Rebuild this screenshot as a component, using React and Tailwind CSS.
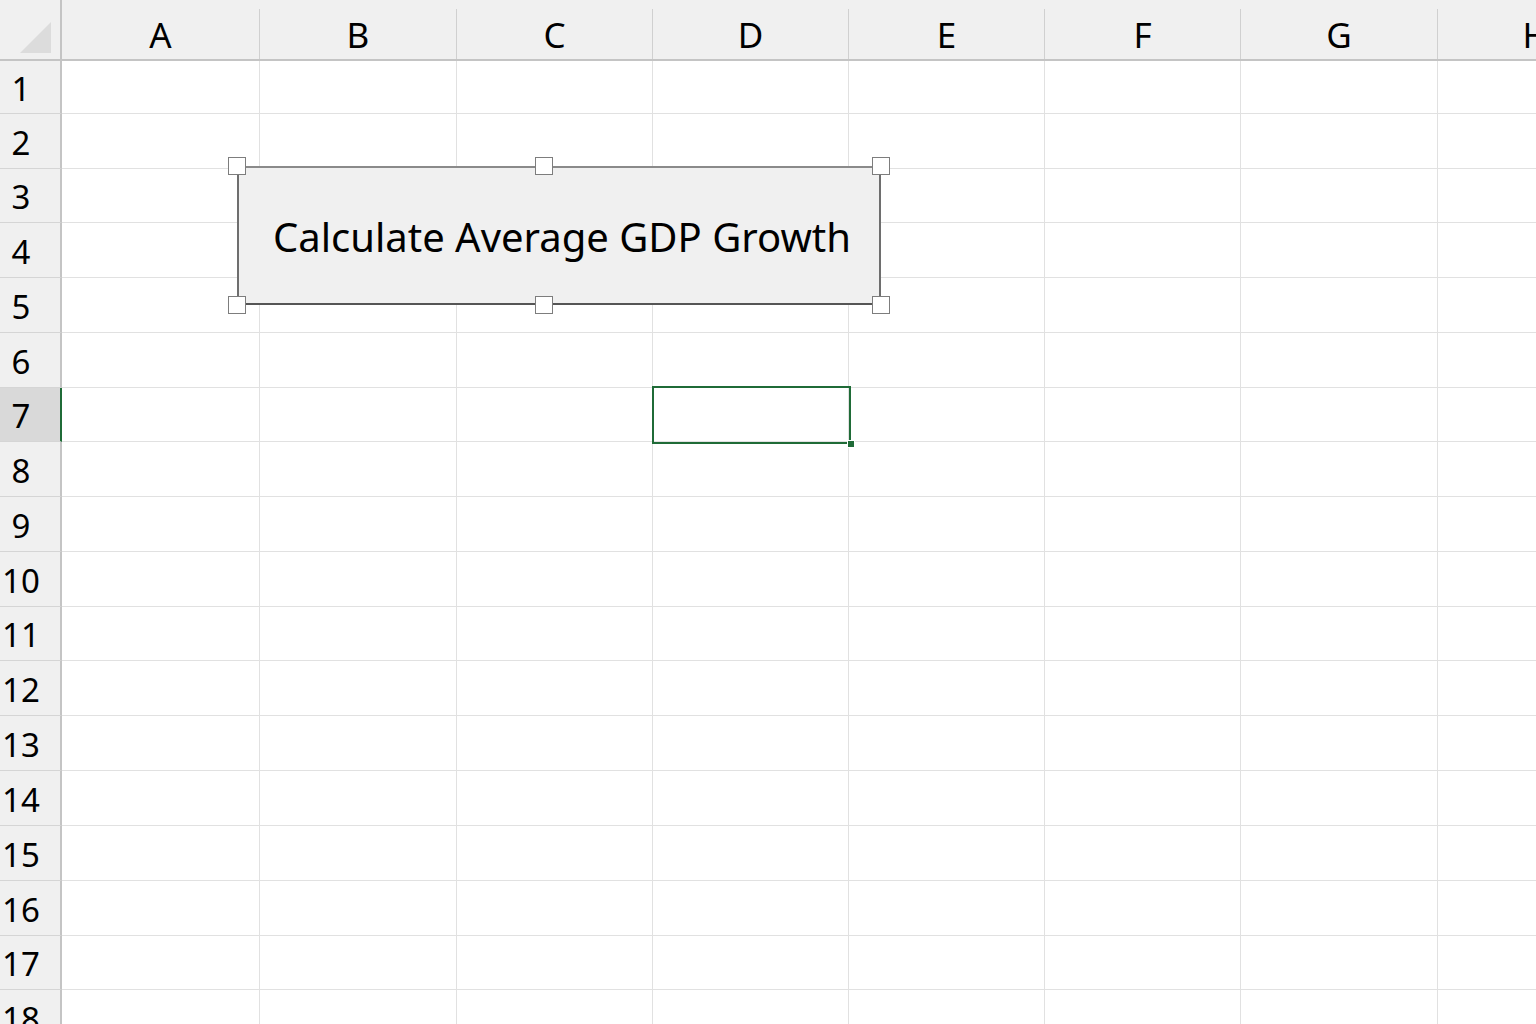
const cols = [
  { l: "A", w: "w-[198px]" },
  { l: "B", w: "w-[197px]" },
  { l: "C", w: "w-[196px]" },
  { l: "D", w: "w-[196px]" },
  { l: "E", w: "w-[196px]" },
  { l: "F", w: "w-[196px]" },
  { l: "G", w: "w-[197px]" },
  { l: "H", w: "w-[196px]" },
];

const rows = [
  { n: 1, h: "h-[53px]" },
  { n: 2, h: "h-[55px]" },
  { n: 3, h: "h-[54px]" },
  { n: 4, h: "h-[55px]" },
  { n: 5, h: "h-[55px]" },
  { n: 6, h: "h-[55px]" },
  { n: 7, h: "h-[54px]" },
  { n: 8, h: "h-[55px]" },
  { n: 9, h: "h-[55px]" },
  { n: 10, h: "h-[55px]" },
  { n: 11, h: "h-[54px]" },
  { n: 12, h: "h-[55px]" },
  { n: 13, h: "h-[55px]" },
  { n: 14, h: "h-[55px]" },
  { n: 15, h: "h-[55px]" },
  { n: 16, h: "h-[55px]" },
  { n: 17, h: "h-[54px]" },
  { n: 18, h: "h-[55px]" },
];

const Handle = ({ pos }) => (
  <div className={`absolute w-[18px] h-[18px] bg-white border border-[#7d7d7d] ${pos}`} />
);

export default function App() {
  return (
    <div
      className="relative w-[1536px] h-[1024px] overflow-hidden bg-white text-black"
      style={{ fontFamily: '"Noto Sans", "Open Sans", sans-serif' }}
    >
      {/* column headers */}
      <div className="flex h-[61px] bg-[#f0f0f0] border-b-2 border-[#c4c4c4]">
        <div className="w-[62px] shrink-0 flex items-end justify-end pr-[9px] pb-[6px] border-r-2 border-[#c4c4c4]">
          <svg width="31" height="31" viewBox="0 0 31 31">
            <polygon points="31,0 31,31 0,31" fill="#dcdcdc" />
          </svg>
        </div>
        {cols.map((c) => (
          <div key={c.l} className={`${c.w} shrink-0 flex`}>
            <div className="flex-1 flex items-center justify-center text-[35px] leading-none pt-[9px]">
              {c.l}
            </div>
            <div className="w-px self-end h-[50px] bg-[#d0d0d0]" />
          </div>
        ))}
      </div>

      {/* grid body */}
      {rows.map((r) => (
        <div key={r.n} className={`flex ${r.h}`}>
          <div
            className={`w-[62px] shrink-0 flex items-center border-b border-[#d5d5d5] ${
              r.n === 7 ? "bg-[#d9d9d9] border-r-2 border-r-[#1f6b37]" : "bg-[#f0f0f0] border-r-2 border-r-[#c4c4c4]"
            }`}
          >
            <span className="w-[42px] text-center text-[33px] leading-none pt-[2px] whitespace-nowrap">{r.n}</span>
          </div>
          {cols.map((c) => (
            <div key={c.l} className={`${c.w} shrink-0 border-r border-b border-[#e1e1e1]`} />
          ))}
        </div>
      ))}

      {/* form button */}
      <div className="absolute left-[237px] top-[166px] w-[644px] h-[139px]">
        <div className="w-full h-full bg-[#f0f0f0] border-2 border-[#6e6e6e] border-t-[#8a8a8a] border-b-[#555555] flex items-center justify-center text-[40px] pt-[2px] pl-[6px]">
          Calculate Average GDP Growth
        </div>
        <Handle pos="-left-[9px] -top-[9px]" />
        <Handle pos="left-[298px] -top-[9px]" />
        <Handle pos="-right-[9px] -top-[9px]" />
        <Handle pos="-left-[9px] -bottom-[9px]" />
        <Handle pos="left-[298px] -bottom-[9px]" />
        <Handle pos="-right-[9px] -bottom-[9px]" />
      </div>

      {/* active cell D7 */}
      <div className="absolute left-[652px] top-[386px] w-[199px] h-[58px] border-2 border-[#1f6b37]">
        <div className="absolute -right-[6px] -bottom-[6px] w-[8px] h-[8px] bg-[#1f6b37] border border-white" />
      </div>
    </div>
  );
}
